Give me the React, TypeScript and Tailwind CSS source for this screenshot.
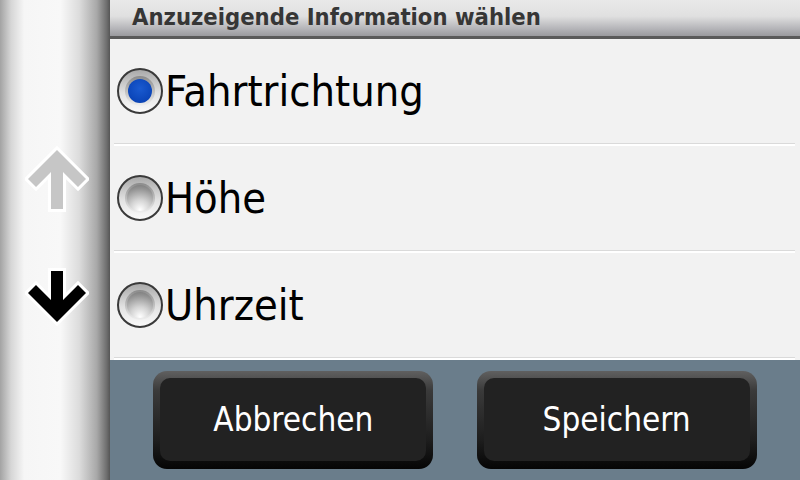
import React from 'react'

const font = { fontFamily: '"DejaVu Sans Condensed", "DejaVu Sans", sans-serif', fontStretch: 'condensed' } as const

function UpArrow() {
  return (
    <svg width="64" height="68" viewBox="0 0 64 68" className="block">
      <polygon
        points="32,5 61,34 53,42 38,27 38,64 26,64 26,27 11,42 3,34"
        fill="#c6c6c6"
        stroke="#ffffff"
        strokeWidth="6"
        strokeLinejoin="miter"
        paintOrder="stroke"
      />
    </svg>
  )
}

function DownArrow() {
  return (
    <svg width="64" height="62" viewBox="0 0 64 62" className="block">
      <polygon
        points="32,56 61,27 53,19 38,34 38,5 26,5 26,34 11,19 3,27"
        fill="#000000"
        stroke="#ffffff"
        strokeWidth="6"
        strokeLinejoin="miter"
        paintOrder="stroke"
      />
    </svg>
  )
}

function Radio({ checked }: { checked: boolean }) {
  return (
    <span className="flex h-[46px] w-[46px] shrink-0 items-center justify-center rounded-full border-2 border-[#3a3a3a] bg-[linear-gradient(to_bottom,#a9a9a9,#e2e2e2_55%,#fafafa)]">
      <span className="flex h-[30px] w-[30px] items-center justify-center rounded-full bg-[linear-gradient(to_bottom,#8a8a8a,#f0f0f0)]">
        {checked ? (
          <span className="h-[24px] w-[24px] rounded-full bg-[radial-gradient(circle_at_50%_40%,#1a5ad0,#0b45b8_70%,#083a9e)]" />
        ) : (
          <span className="h-[26px] w-[26px] rounded-full bg-[radial-gradient(circle_at_50%_95%,#ffffff,#d4d4d4_35%,#949494_75%,#727272)]" />
        )}
      </span>
    </span>
  )
}

function Row({ label, checked }: { label: string; checked?: boolean }) {
  return (
    <div className="flex h-[107px] flex-col">
      <div className="flex flex-1 items-center pl-[7px]">
        <Radio checked={!!checked} />
        <span className="ml-[2px] text-[43px] leading-none text-black" style={font}>
          {label}
        </span>
      </div>
      <div className="ml-[4px] mr-[5px] h-px bg-[#dadada]" />
      <div className="ml-[4px] mr-[5px] h-[2px] bg-white" />
    </div>
  )
}

function Button({ label }: { label: string }) {
  return (
    <div className="h-[98px] w-[280px] rounded-[14px] bg-[linear-gradient(to_bottom,#606060,#3a3a3a_20%,#1e1e1e_70%,#050505)] p-[7px] pb-[8px]">
      <div className="flex h-full items-center justify-center rounded-[10px] bg-[#222222] text-[33px] text-white" style={font}>
        {label}
      </div>
    </div>
  )
}

export default function App() {
  return (
    <div className="flex h-[480px] w-[800px] overflow-hidden bg-[#f2f2f2]">
      <aside className="flex w-[110px] shrink-0 flex-col bg-[linear-gradient(to_right,#a3a3a3_0%,#d6d6d6_10%,#f6f6f6_22%,#f8f8f8_55%,#dcdcdc_72%,#a8a8a8_88%,#6e6e6e_97%,#555555_100%)] pl-[25px] pt-[145px]">
        <UpArrow />
        <div className="mt-[53px]">
          <DownArrow />
        </div>
      </aside>
      <main className="flex flex-1 flex-col">
        <header className="flex h-[39px] flex-col">
          <div className="flex flex-1 items-center bg-[linear-gradient(to_bottom,#e9e9e9,#e0e0e0_45%,#b4b4b8_80%,#9a9a9e)] pl-[22px]">
            <span className="text-[23.6px] font-bold leading-none text-[#363636]" style={font}>
              Anzuzeigende Information wählen
            </span>
          </div>
          <div className="h-[3px] bg-[#5a5a5a]" />
        </header>
        <Row label="Fahrtrichtung" checked />
        <Row label="Höhe" />
        <Row label="Uhrzeit" />
        <footer className="flex flex-1 items-center justify-evenly bg-[#6a7d8b]">
          <Button label="Abbrechen" />
          <Button label="Speichern" />
        </footer>
      </main>
    </div>
  )
}
